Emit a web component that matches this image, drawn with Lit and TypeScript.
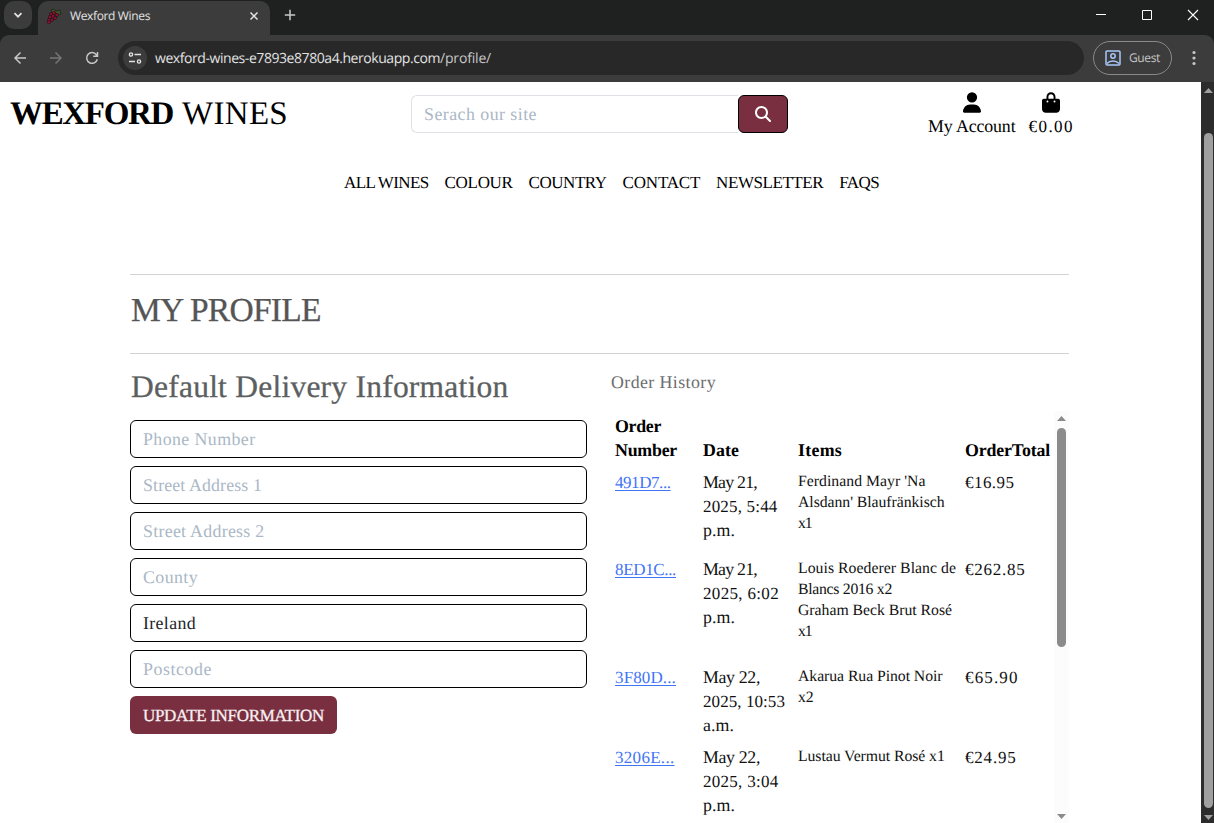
import { LitElement, html, css, svg } from "lit";
import { customElement } from "lit/decorators.js";

const SERIF = '"Liberation Serif", serif';
const SANS = '"Open Sans", sans-serif';
const pen = document.createElement("canvas").getContext("2d")!;

/**
 * One line of text whose tracking is computed so that it spans `width` pixels.
 * Mixed-case serif text is set slightly larger than capitals, in a line box of the same height.
 */
function line(text: string, width: number, size = 17, cls = "", weight = 400, family = SERIF) {
  const mixed = family === SERIF && /[a-z]/.test(text);
  const px = mixed ? size * 1.05 : size;
  pen.font = `${weight} ${px}px ${family}`;
  const spacing = (width - pen.measureText(text).width) / text.length;
  return html`<span
    class="line ${cls}"
    style="font: ${weight} ${px}px/${size}px ${family}; letter-spacing: ${spacing.toFixed(3)}px"
    ><span class="strut">${text}</span></span
  >`;
}

type Span = [string, number];
interface Order {
  id: Span;
  date: Span[];
  items: Span[];
  total: Span;
}

const NAV: Span[] = [
  ["ALL WINES", 85.5],
  ["COLOUR", 68],
  ["COUNTRY", 78],
  ["CONTACT", 77.5],
  ["NEWSLETTER", 107],
  ["FAQS", 40],
];

const FIELDS: { text: Span; filled?: boolean }[] = [
  { text: ["Phone Number", 112.5] },
  { text: ["Street Address 1", 120] },
  { text: ["Street Address 2", 122.5] },
  { text: ["County", 55] },
  { text: ["Ireland", 53], filled: true },
  { text: ["Postcode", 69] },
];

const ORDERS: Order[] = [
  {
    id: ["491D7...", 55.5],
    date: [["May 21,", 54], ["2025, 5:44", 74.5], ["p.m.", 32]],
    items: [["Ferdinand Mayr 'Na", 127.5], ["Alsdann' Blaufränkisch", 146.5], ["x1", 13.5]],
    total: ["€16.95", 49.5],
  },
  {
    id: ["8ED1C...", 61],
    date: [["May 21,", 54], ["2025, 6:02", 76], ["p.m.", 32]],
    items: [
      ["Louis Roederer Blanc de", 158],
      ["Blancs 2016 x2", 94],
      ["Graham Beck Brut Rosé", 154],
      ["x1", 13.5],
    ],
    total: ["€262.85", 60.5],
  },
  {
    id: ["3F80D...", 61],
    date: [["May 22,", 57], ["2025, 10:53", 82], ["a.m.", 31]],
    items: [["Akarua Rua Pinot Noir", 144.5], ["x2", 15.5]],
    total: ["€65.90", 53.5],
  },
  {
    id: ["3206E...", 59.5],
    date: [["May 22,", 57], ["2025, 3:04", 75.5], ["p.m.", 32]],
    items: [["Lustau Vermut Rosé x1", 147]],
    total: ["€24.95", 51.5],
  },
];

const textStyles = css`
  .line {
    display: block;
    white-space: pre;
    text-rendering: geometricPrecision;
  }
`;

@customElement("browser-bar")
class BrowserBar extends LitElement {
  static styles = [
    textStyles,
    css`
      :host { display: block; height: 82px; background: #1f2120; color: #e3e3e3; }
      svg { display: block; flex: none; }
      .tabs { height: 35px; display: flex; }
      .menu { width: 28px; height: 28px; margin: 1px 0 0 4px; border-radius: 10px; background: #3c3c3c; display: grid; place-items: center; }
      .tab { box-sizing: border-box; width: 232px; height: 34px; margin: 1px 0 0 6px; padding: 0 10px 4px 8px; border-radius: 10px 10px 0 0; background: #3c3c3c; display: flex; align-items: center; gap: 8px; }
      .tab .line { flex: 1; }
      .plus { margin: 9px 0 0 14px; }
      .window { margin: 9px 15px 0 auto; display: flex; gap: 34px; }
      .tools { box-sizing: border-box; height: 47px; padding: 0 12px 0 13px; display: flex; align-items: center; background: #3c3c3c; border-radius: 9px 9px 0 0; padding-bottom: 1px; }
      .nav { display: flex; gap: 22px; }
      .url { width: 966px; height: 34px; margin-left: 19px; border-radius: 17px; background: #282828; display: flex; align-items: center; }
      .url .line { padding-top: 2px; }
      .site { width: 24px; height: 24px; margin: 0 8px 0 5px; border-radius: 50%; background: #3c3c3c; display: grid; place-items: center; }
      .path { color: #c7c7c7; }
      .guest { box-sizing: border-box; width: 79px; height: 34px; margin-left: 9px; padding-left: 11px; border: 1px solid #8a8a8a; border-radius: 17px; display: flex; align-items: center; gap: 8px; color: #c7c7c7; }
      .dots { margin-left: auto; }
    `,
  ];

  render() {
    const grapes = [[5, 6], [8, 5], [11, 7], [4, 9], [7, 8], [9, 10], [3, 12], [6, 12], [3, 14.3]];
    return html`
      <div class="tabs">
        <div class="menu">
          <svg width="10" height="10" viewBox="0 0 10 10"><path d="M1.5 3.2 5 6.7l3.5-3.5" fill="none" stroke="#e3e3e3" stroke-width="1.7" /></svg>
        </div>
        <div class="tab">
          <svg width="16" height="16" viewBox="0 0 16 16">
            <path d="M5 2 8 1l2 2 4-1 1 4-3 1-3-3-3 1z" fill="#46502c" stroke="#222c18" />
            ${grapes.map(([x, y]) => svg`<circle cx=${x} cy=${y} r="1.6" fill="#8d1535" stroke="#2c1018" stroke-width=".7" />`)}
          </svg>
          ${line("Wexford Wines", 80, 12, "", 400, SANS)}
          <svg width="12" height="12" viewBox="0 0 12 12"><path d="m2.5 2.5 7 7m0-7-7 7" stroke="#e3e3e3" stroke-width="1.5" /></svg>
        </div>
        <svg class="plus" width="12" height="12" viewBox="0 0 12 12"><path d="M6 .8v10.4M.8 6h10.4" stroke="#c7c7c7" stroke-width="1.5" /></svg>
        <div class="window">
          <svg width="12" height="12" viewBox="0 0 12 12"><path d="M1 5.5h10" stroke="#fff" /></svg>
          <svg width="12" height="12" viewBox="0 0 12 12"><path d="M1.5 1.5h9v9h-9z" fill="none" stroke="#fff" /></svg>
          <svg width="12" height="12" viewBox="0 0 12 12"><path d="m1 1 10 10m0-10L1 11" stroke="#fff" stroke-width="1.1" /></svg>
        </div>
      </div>
      <div class="tools">
        <div class="nav">
          <svg width="14" height="14" viewBox="0 0 14 14"><path d="M13 7H2m5.5-5.5L2 7l5.5 5.5" fill="none" stroke="#c7c7c7" stroke-width="1.5" /></svg>
          <svg width="14" height="14" viewBox="0 0 14 14"><path d="M1 7h11M6.5 1.5 12 7l-5.5 5.5" fill="none" stroke="#757575" stroke-width="1.5" /></svg>
          <svg width="14" height="14" viewBox="0 0 14 14"><path d="M12.3 8.2A5.4 5.4 0 1 1 11.4 3.7L12.3 5M12.5 1v4.3H8.2" fill="none" stroke="#c7c7c7" stroke-width="1.5" /></svg>
        </div>
        <div class="url">
          <div class="site">
            <svg width="14" height="14" viewBox="0 0 14 14" fill="none" stroke="#e3e3e3" stroke-width="1.4"><circle cx="3" cy="3.5" r="1.6" /><path d="M6.5 3.5H13M1 10.5h6" /><circle cx="11" cy="10.5" r="1.6" /></svg>
          </div>
          ${line("wexford-wines-e7893e8780a4.herokuapp.com", 285, 14, "", 400, SANS)}
          ${line("/profile/", 51, 14, "path", 400, SANS)}
        </div>
        <div class="guest">
          <svg width="16" height="16" viewBox="0 0 16 16" fill="none" stroke="#a8c7fa" stroke-width="1.5"><rect x="1" y="1" width="14" height="14" rx="1" /><circle cx="8" cy="6" r="2.2" /><path d="M2 13.5c3-3.5 9-3.5 12 0" /></svg>
          ${line("Guest", 31, 12, "", 400, SANS)}
        </div>
        <svg class="dots" width="16" height="16" viewBox="0 0 16 16" fill="#c7c7c7"><circle cx="8" cy="2.5" r="1.6" /><circle cx="8" cy="8" r="1.6" /><circle cx="8" cy="13.5" r="1.6" /></svg>
      </div>
    `;
  }
}

@customElement("site-header")
class SiteHeader extends LitElement {
  static styles = [
    textStyles,
    css`
      :host { display: block; height: 192px; color: #000; }
      svg { display: block; }
      .top { height: 58px; display: flex; }
      .brand { width: 400px; padding: 16px 0 0 10px; box-sizing: border-box; display: flex; gap: 9px; }
      .search { width: 377px; height: 38px; margin: 13px 0 0 11px; display: flex; }
      .box { flex: 1; box-sizing: border-box; padding: 10px 12px; border: 1px solid #dee2e6; border-right: 0; border-radius: 6px 0 0 6px; color: #aab7c6; }
      .go { box-sizing: border-box; width: 50px; border: 1px solid #000; border-radius: 6px; background: #792f40; display: grid; place-items: center; }
      .links { margin: 10px 0 0 140px; display: flex; gap: 13px; align-items: flex-start; }
      .link { display: flex; flex-direction: column; align-items: center; gap: 5px; }
      .menu { padding: 34px 0 0 344px; display: flex; gap: 16px; }
    `,
  ];

  render() {
    return html`
      <div class="top">
        <div class="brand">${line("WEXFORD", 163, 33, "", 700)}${line("WINES", 106, 33)}</div>
        <div class="search">
          <div class="box">${line("Serach our site", 113)}</div>
          <div class="go">
            <svg width="16" height="16" viewBox="0 0 512 512" fill="#fff"><path d="M416 208c0 45.9-14.9 88.3-40 122.7L502.6 457.4c12.5 12.5 12.5 32.8 0 45.3s-32.8 12.5-45.3 0L330.7 376c-34.4 25.2-76.8 40-122.7 40C93.1 416 0 322.9 0 208S93.1 0 208 0S416 93.1 416 208zM208 352a144 144 0 1 0 0-288 144 144 0 1 0 0 288z" /></svg>
          </div>
        </div>
        <div class="links">
          <div class="link">
            <svg width="18" height="21" viewBox="0 0 448 512"><path d="M224 256A128 128 0 1 0 224 0a128 128 0 1 0 0 256zm-45.7 48C79.8 304 0 383.8 0 482.3C0 498.7 13.3 512 29.7 512H418.3c16.4 0 29.7-13.3 29.7-29.7C448 383.8 368.2 304 269.7 304H178.3z" /></svg>
            ${line("My Account", 88.5)}
          </div>
          <div class="link">
            <svg width="18" height="21" viewBox="0 0 448 512"><path d="M160 112c0-35.3 28.7-64 64-64s64 28.7 64 64v48H160V112zm-48 48H48c-26.5 0-48 21.500-48 48V416c0 53 43 96 96 96H352c53 0 96-43 96-96V208c0-26.5-21.5-48-48-48H336V112C336 50.1 285.9 0 224 0S112 50.1 112 112v48zm24 48a24 24 0 1 1 0 48 24 24 0 1 1 0-48zm152 24a24 24 0 1 1 48 0 24 24 0 1 1-48 0z" /></svg>
            ${line("€0.00", 45.5)}
          </div>
        </div>
      </div>
      <div class="menu">${NAV.map(([t, w]) => line(t, w))}</div>
    `;
  }
}

@customElement("delivery-form")
class DeliveryForm extends LitElement {
  static styles = [
    textStyles,
    css`
      :host { display: block; width: 457px; }
      .title { padding: 18px 0 0 1px; height: 48px; color: #5c5f61; -webkit-text-stroke: 0.3px currentColor; }
      .fields { display: flex; flex-direction: column; gap: 8px; align-items: flex-start; }
      .field { box-sizing: border-box; width: 100%; height: 38px; padding: 10px 12px; border: 1px solid #000; border-radius: 6px; color: #aab7c6; }
      .filled { color: #212529; }
      .save { box-sizing: border-box; width: 207px; height: 38px; padding: 11px 13px; border-radius: 6px; background: #792f40; color: #f7eff1; -webkit-text-stroke: 0.3px currentColor; }
    `,
  ];

  render() {
    return html`
      <div class="title">${line("Default Delivery Information", 377.5, 30)}</div>
      <div class="fields">
        ${FIELDS.map((f) => html`<div class="field ${f.filled ? "filled" : ""}">${line(...f.text)}</div>`)}
        <div class="save">${line("UPDATE INFORMATION", 181)}</div>
      </div>
    `;
  }
}

@customElement("order-history")
class OrderHistory extends LitElement {
  static styles = [
    textStyles,
    css`
      :host { display: block; width: 458px; color: #111; }
      .caption { height: 41px; padding-top: 20px; box-sizing: border-box; color: #6c6e70; }
      .scroller { display: flex; height: 412px; margin-top: 16px; overflow: hidden; }
      .table { width: 443px; }
      .row, .head { display: grid; grid-template-columns: 88px 95px 167px 93px; }
      .head { height: 56px; align-items: end; color: #000; }
      .cell { padding: 4px 0 4px 4px; }
      .cell .line { padding: 3px 0 4px; }
      .list { padding-bottom: 20px; }
      .list .line { padding: 3px 0 3px; }
      .id { color: #3f75f5; }
      .id .strut { text-decoration: underline 1px; text-underline-offset: 2px; text-decoration-skip-ink: none; }
      .bar { width: 15px; box-sizing: border-box; padding: 5px 3px 4px; background: #fcfcfc; display: flex; flex-direction: column; justify-content: space-between; align-items: center; }
      .thumb { width: 9px; height: 219px; margin: 7px 0 auto; border-radius: 5px; background: #8b8b8b; }
    `,
  ];

  render() {
    const th = (...lines: Span[]) => html`<div class="cell">${lines.map(([t, w]) => line(t, w, 17, "", 700))}</div>`;
    return html`
      <div class="caption">${line("Order History", 105)}</div>
      <div class="scroller">
        <div class="table">
          <div class="head">
            ${th(["Order", 46], ["Number", 62])} ${th(["Date", 36])} ${th(["Items", 44])} ${th(["OrderTotal", 85])}
          </div>
          ${ORDERS.map(
            (o) => html`<div class="row">
              <div class="cell id">${line(...o.id)}</div>
              <div class="cell">${o.date.map((d) => line(...d))}</div>
              <div class="cell list">${o.items.map(([t, w]) => line(t, w, 15))}</div>
              <div class="cell">${line(...o.total)}</div>
            </div>`
          )}
        </div>
        <div class="bar">
          <svg width="9" height="5" viewBox="0 0 9 5"><path d="M0 5 4.5 0 9 5z" fill="#8b8b8b" /></svg>
          <div class="thumb"></div>
          <svg width="9" height="5" viewBox="0 0 9 5"><path d="M0 0h9L4.5 5z" fill="#8b8b8b" /></svg>
        </div>
      </div>
    `;
  }
}

@customElement("app-root")
class AppRoot extends LitElement {
  static styles = [
    textStyles,
    css`
      :host { display: block; width: 1214px; height: 823px; overflow: hidden; background: #fff; }
      .view { display: flex; height: 741px; }
      .page { width: 1201px; overflow: hidden; }
      .content { width: 939px; margin-left: 130px; }
      .heading { box-sizing: border-box; height: 80px; padding: 19px 0 0 1px; border: solid #d3d3d3; border-width: 1px 0; color: #555; -webkit-text-stroke: 0.3px currentColor; }
      .columns { display: flex; justify-content: space-between; height: 469px; overflow: hidden; }
      .bar { width: 13px; box-sizing: border-box; padding: 6px 0 3px 2px; background: #2c2c2c; display: flex; flex-direction: column; align-items: center; }
      .thumb { width: 9px; height: 675px; margin: 40px 0 auto; border-radius: 5px; background: #9f9f9f; }
    `,
  ];

  render() {
    return html`
      <browser-bar></browser-bar>
      <div class="view">
        <div class="page">
          <site-header></site-header>
          <div class="content">
            <div class="heading">${line("MY PROFILE", 191, 33.5)}</div>
            <div class="columns">
              <delivery-form></delivery-form>
              <order-history></order-history>
            </div>
          </div>
        </div>
        <div class="bar">
          <svg width="9" height="5" viewBox="0 0 9 5"><path d="M0 5 4.5 0 9 5z" fill="#9f9f9f" /></svg>
          <div class="thumb"></div>
          <svg width="9" height="5" viewBox="0 0 9 5"><path d="M0 0h9L4.5 5z" fill="#9f9f9f" /></svg>
        </div>
      </div>
    `;
  }
}
